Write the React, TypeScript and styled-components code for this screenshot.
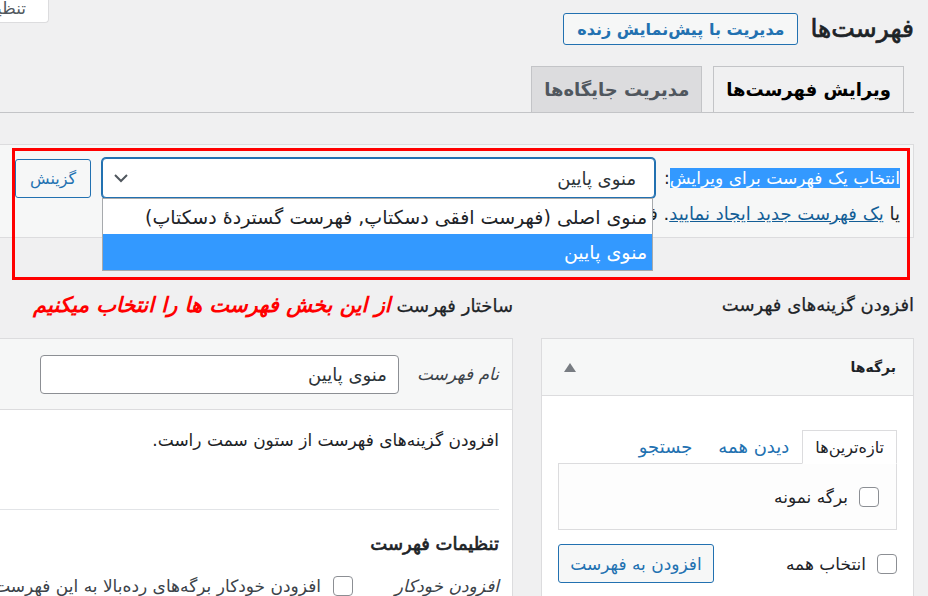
import React from "react";
import styled, { createGlobalStyle } from "styled-components";

const Global = createGlobalStyle`
  html, body { margin: 0; padding: 0; background: #f0f0f1; }
  * { box-sizing: border-box; }
`;

const Page = styled.div`
  position: relative;
  width: 928px;
  height: 596px;
  overflow: hidden;
  background: #f0f0f1;
  direction: rtl;
  font-family: "DejaVu Sans", "Noto Sans", sans-serif;
  color: #3c434a;
  font-size: 17px;
`;

const Wrap = styled.div`
  margin-right: 14px;
  margin-left: -40px;
`;

const Header = styled.div`
  display: flex;
  justify-content: space-between;
  align-items: flex-start;
  height: 66px;
`;

const TitleGroup = styled.div`
  display: flex;
  align-items: center;
  gap: 12px;
  padding-top: 13px;
`;

const Title = styled.h1`
  margin: 0;
  font-size: 25px;
  line-height: 32px;
  font-weight: normal;
  -webkit-text-stroke: 0.7px #1d2327;
  color: #1d2327;
`;

const OutlineButton = styled.button<{ $w?: number; $h?: number; $size?: number; $bold?: boolean }>`
  font-family: inherit;
  width: ${(p) => (p.$w ? `${p.$w}px` : "auto")};
  height: ${(p) => p.$h ?? 39}px;
  padding: 0;
  border: 1px solid #2271b1;
  border-radius: 3px;
  background: #f6f7f7;
  color: #2271b1;
  font-size: ${(p) => p.$size ?? 16}px;
  font-weight: ${(p) => (p.$bold ? "bold" : "normal")};
  white-space: nowrap;
  cursor: pointer;
`;

const ScreenOptions = styled.button`
  font-family: inherit;
  width: 89px;
  height: 30px;
  margin-top: -7px;
  padding: 0 22px 0 0;
  border: 1px solid #dcdcde;
  border-top: none;
  border-radius: 0 0 4px 4px;
  background: #fff;
  color: #50575e;
  font-size: 17px;
  text-align: right;
  white-space: nowrap;
  overflow: hidden;
  direction: rtl;
`;

const TabBar = styled.div`
  display: flex;
  align-items: flex-end;
  gap: 11px;
  height: 47px;
  padding-right: 10px;
  border-bottom: 1px solid #c3c4c7;
`;

const Tab = styled.div<{ $active?: boolean }>`
  height: 46px;
  padding: 0 12px;
  display: flex;
  align-items: center;
  border: 1px solid #c3c4c7;
  border-bottom: none;
  font-size: 18px;
  font-weight: bold;
  background: ${(p) => (p.$active ? "#f0f0f1" : "#dcdcde")};
  color: ${(p) => (p.$active ? "#000" : "#50575e")};
`;

const ManageBox = styled.div`
  margin-top: 31px;
  height: 94px;
  padding: 13px 13px 0 0;
  background: #f6f7f7;
  border: 1px solid #dcdcde;
`;

const ManageRow = styled.div`
  display: flex;
  align-items: center;
  height: 40px;
`;

const Label = styled.span`
  font-size: 17px;
  color: #1d2327;
  white-space: nowrap;
`;

const Selected = styled.span`
  background: #3399ff;
  color: #fff;
`;

const SelectWrap = styled.div`
  position: relative;
  width: 553px;
  height: 40px;
  margin-right: 9px;
`;

const SelectBox = styled.div`
  height: 40px;
  display: flex;
  align-items: center;
  justify-content: space-between;
  padding: 0 18px 0 10px;
  background: #fff;
  border: 1px solid #2271b1;
  box-shadow: 0 0 0 1px #2271b1;
  border-radius: 4px;
  font-size: 18px;
  color: #2c3338;
`;

const DropList = styled.ul`
  position: absolute;
  top: 40px;
  right: 2px;
  width: 551px;
  margin: 0;
  padding: 0;
  list-style: none;
  background: #fff;
  border: 1px solid #a7aaad;
  z-index: 2;
`;

const DropOption = styled.li<{ $active?: boolean; $h: number }>`
  height: ${(p) => p.$h}px;
  padding-right: 5px;
  display: flex;
  align-items: center;
  font-size: 19px;
  background: ${(p) => (p.$active ? "#3399ff" : "#fff")};
  color: ${(p) => (p.$active ? "#fff" : "#1d2327")};
  white-space: nowrap;
`;

const ChooseButton = styled(OutlineButton)`
  margin-right: 11px;
`;

const HelpLine = styled.div`
  margin-top: 5px;
  font-size: 18px;
  line-height: 22px;
  color: #1d2327;
  white-space: nowrap;
`;

const HelpLink = styled.a`
  color: #135e96;
  text-decoration: underline;
`;

const Columns = styled.div`
  display: flex;
  align-items: flex-start;
  gap: 28px;
  margin-top: 47px;
`;

const RightCol = styled.div`
  width: 373px;
  flex: none;
`;

const LeftCol = styled.div`
  flex: 1;
  min-width: 0;
`;

const ColHeading = styled.h2`
  margin: 0 0 13px;
  height: 40px;
  line-height: 40px;
  font-size: 18px;
  font-weight: normal;
  -webkit-text-stroke: 0.25px #1d2327;
  color: #1d2327;
  white-space: nowrap;
`;

const Annotation = styled.span`
  color: #ff0000;
  font-weight: bold;
  font-style: italic;
  font-size: 21px;
  -webkit-text-stroke: 0;
`;

const Panel = styled.div`
  background: #fff;
  border: 1px solid #dcdcde;
  height: 400px;
`;

const AccHeader = styled.div`
  height: 57px;
  display: flex;
  align-items: center;
  justify-content: space-between;
  padding: 0 17px 0 22px;
  background: #f6f7f7;
  border-bottom: 1px solid #dcdcde;
  font-size: 14px;
  font-weight: bold;
  color: #1d2327;
`;

const AccBody = styled.div`
  padding: 34px 16px 0 16px;
`;

const TabsRow = styled.div`
  display: flex;
  align-items: flex-end;
  height: 33px;
`;

const SmallTab = styled.div`
  height: 34px;
  margin-bottom: -1px;
  padding: 0 12px;
  display: flex;
  align-items: center;
  border: 1px solid #dcdcde;
  border-bottom: 1px solid #fff;
  background: #fff;
  color: #1d2327;
  font-size: 16px;
  position: relative;
  z-index: 1;
`;

const TabLink = styled.a`
  height: 33px;
  padding: 0 13px;
  display: flex;
  align-items: center;
  color: #2271b1;
  font-size: 18px;
  text-decoration: none;
`;

const TabPanel = styled.div`
  height: 67px;
  padding: 0 17px;
  display: flex;
  align-items: center;
  border: 1px solid #dcdcde;
  background: #fdfdfd;
`;

const CheckLabel = styled.label`
  display: flex;
  align-items: center;
  gap: 11px;
  font-size: 17px;
  color: #1d2327;
`;

const Check = styled.span`
  width: 20px;
  height: 20px;
  flex: none;
  border: 1px solid #8c8f94;
  border-radius: 4px;
  background: #fff;
`;

const BottomRow = styled.div`
  margin-top: 14px;
  display: flex;
  align-items: center;
  justify-content: space-between;
`;

const NameHeader = styled.div`
  height: 71px;
  display: flex;
  align-items: center;
  gap: 18px;
  padding-right: 13px;
  background: #f6f7f7;
  border-bottom: 1px solid #dcdcde;
`;

const ItalicLabel = styled.span<{ $w?: number }>`
  font-style: italic;
  font-size: 17px;
  color: #3c434a;
  white-space: nowrap;
  width: ${(p) => (p.$w ? `${p.$w}px` : "auto")};
  flex: none;
`;

const NameInput = styled.div`
  width: 359px;
  height: 39px;
  padding: 0 11px;
  display: flex;
  align-items: center;
  border: 1px solid #8c8f94;
  border-radius: 4px;
  background: #fff;
  font-size: 18px;
  color: #2c3338;
`;

const LeftBody = styled.div`
  padding: 0 13px 0 0;
`;

const BodyText = styled.p`
  margin: 18px 0 0;
  line-height: 24px;
  font-size: 17px;
  color: #1d2327;
`;

const Separator = styled.div`
  margin-top: 57px;
  border-top: 1px solid #e2e4e7;
`;

const SettingsHeading = styled.h3`
  margin: 20px 0 0;
  height: 28px;
  line-height: 28px;
  font-size: 18px;
  font-weight: normal;
  -webkit-text-stroke: 0.7px #1d2327;
  color: #1d2327;
`;

const SettingsRow = styled.div`
  margin-top: 18px;
  display: flex;
  align-items: center;
  gap: 12px;
  white-space: nowrap;
  font-size: 17px;
  color: #3c434a;
`;

const RedFrame = styled.div`
  position: absolute;
  left: 12px;
  top: 148px;
  width: 898px;
  height: 132px;
  border: 3px solid #ff0000;
  pointer-events: none;
  z-index: 5;
`;

const Chevron = () => (
  <svg width="16" height="10" viewBox="0 0 16 10">
    <path d="M2 2 L8 8 L14 2" fill="none" stroke="#50575e" strokeWidth="2" />
  </svg>
);

const UpArrow = () => (
  <svg width="12" height="9" viewBox="0 0 12 9">
    <path d="M6 0 L12 9 L0 9 Z" fill="#787c82" />
  </svg>
);

export default function App() {
  return (
    <>
      <Global />
      <Page>
        <Wrap>
          <Header>
            <TitleGroup>
              <Title>فهرست‌ها</Title>
              <OutlineButton $w={235} $h={32} $size={16} $bold>
                مدیریت با پیش‌نمایش زنده
              </OutlineButton>
            </TitleGroup>
            <ScreenOptions>تنظیمات صفحه</ScreenOptions>
          </Header>

          <TabBar>
            <Tab $active>ویرایش فهرست‌ها</Tab>
            <Tab>مدیریت جایگاه‌ها</Tab>
          </TabBar>

          <ManageBox>
            <ManageRow>
              <Label>
                <Selected>انتخاب یک فهرست برای ویرایش</Selected>:
              </Label>
              <SelectWrap>
                <SelectBox>
                  <span>منوی پایین</span>
                  <Chevron />
                </SelectBox>
                <DropList>
                  <DropOption $h={35}>
                    منوی اصلی (فهرست افقی دسکتاپ, فهرست گستردهٔ دسکتاپ)
                  </DropOption>
                  <DropOption $h={36} $active>
                    منوی پایین
                  </DropOption>
                </DropList>
              </SelectWrap>
              <ChooseButton $w={76} $h={39} $size={16}>
                گزینش
              </ChooseButton>
            </ManageRow>
            <HelpLine>
              یا <HelpLink>یک فهرست جدید ایجاد نمایید</HelpLink>. فراموش نکنید
              تغییرات خود را ذخیره کنید!
            </HelpLine>
          </ManageBox>

          <Columns>
            <RightCol>
              <ColHeading>افزودن گزینه‌های فهرست</ColHeading>
              <Panel>
                <AccHeader>
                  <span>برگه‌ها</span>
                  <UpArrow />
                </AccHeader>
                <AccBody>
                  <TabsRow>
                    <SmallTab>تازه‌ترین‌ها</SmallTab>
                    <TabLink>دیدن همه</TabLink>
                    <TabLink>جستجو</TabLink>
                  </TabsRow>
                  <TabPanel>
                    <CheckLabel>
                      <Check />
                      برگه نمونه
                    </CheckLabel>
                  </TabPanel>
                  <BottomRow>
                    <CheckLabel>
                      <Check />
                      انتخاب همه
                    </CheckLabel>
                    <OutlineButton $w={156} $h={39} $size={17}>
                      افزودن به فهرست
                    </OutlineButton>
                  </BottomRow>
                </AccBody>
              </Panel>
            </RightCol>

            <LeftCol>
              <ColHeading>
                ساختار فهرست <Annotation>از این بخش فهرست ها را انتخاب میکنیم</Annotation>
              </ColHeading>
              <Panel>
                <NameHeader>
                  <ItalicLabel>نام فهرست</ItalicLabel>
                  <NameInput>منوی پایین</NameInput>
                </NameHeader>
                <LeftBody>
                  <BodyText>افزودن گزینه‌های فهرست از ستون سمت راست.</BodyText>
                  <Separator />
                  <SettingsHeading>تنظیمات فهرست</SettingsHeading>
                  <SettingsRow>
                    <ItalicLabel $w={134}>افزودن خودکار</ItalicLabel>
                    <Check />
                    <span>افزودن خودکار برگه‌های رده‌بالا به این فهرست</span>
                  </SettingsRow>
                </LeftBody>
              </Panel>
            </LeftCol>
          </Columns>
        </Wrap>
        <RedFrame />
      </Page>
    </>
  );
}
